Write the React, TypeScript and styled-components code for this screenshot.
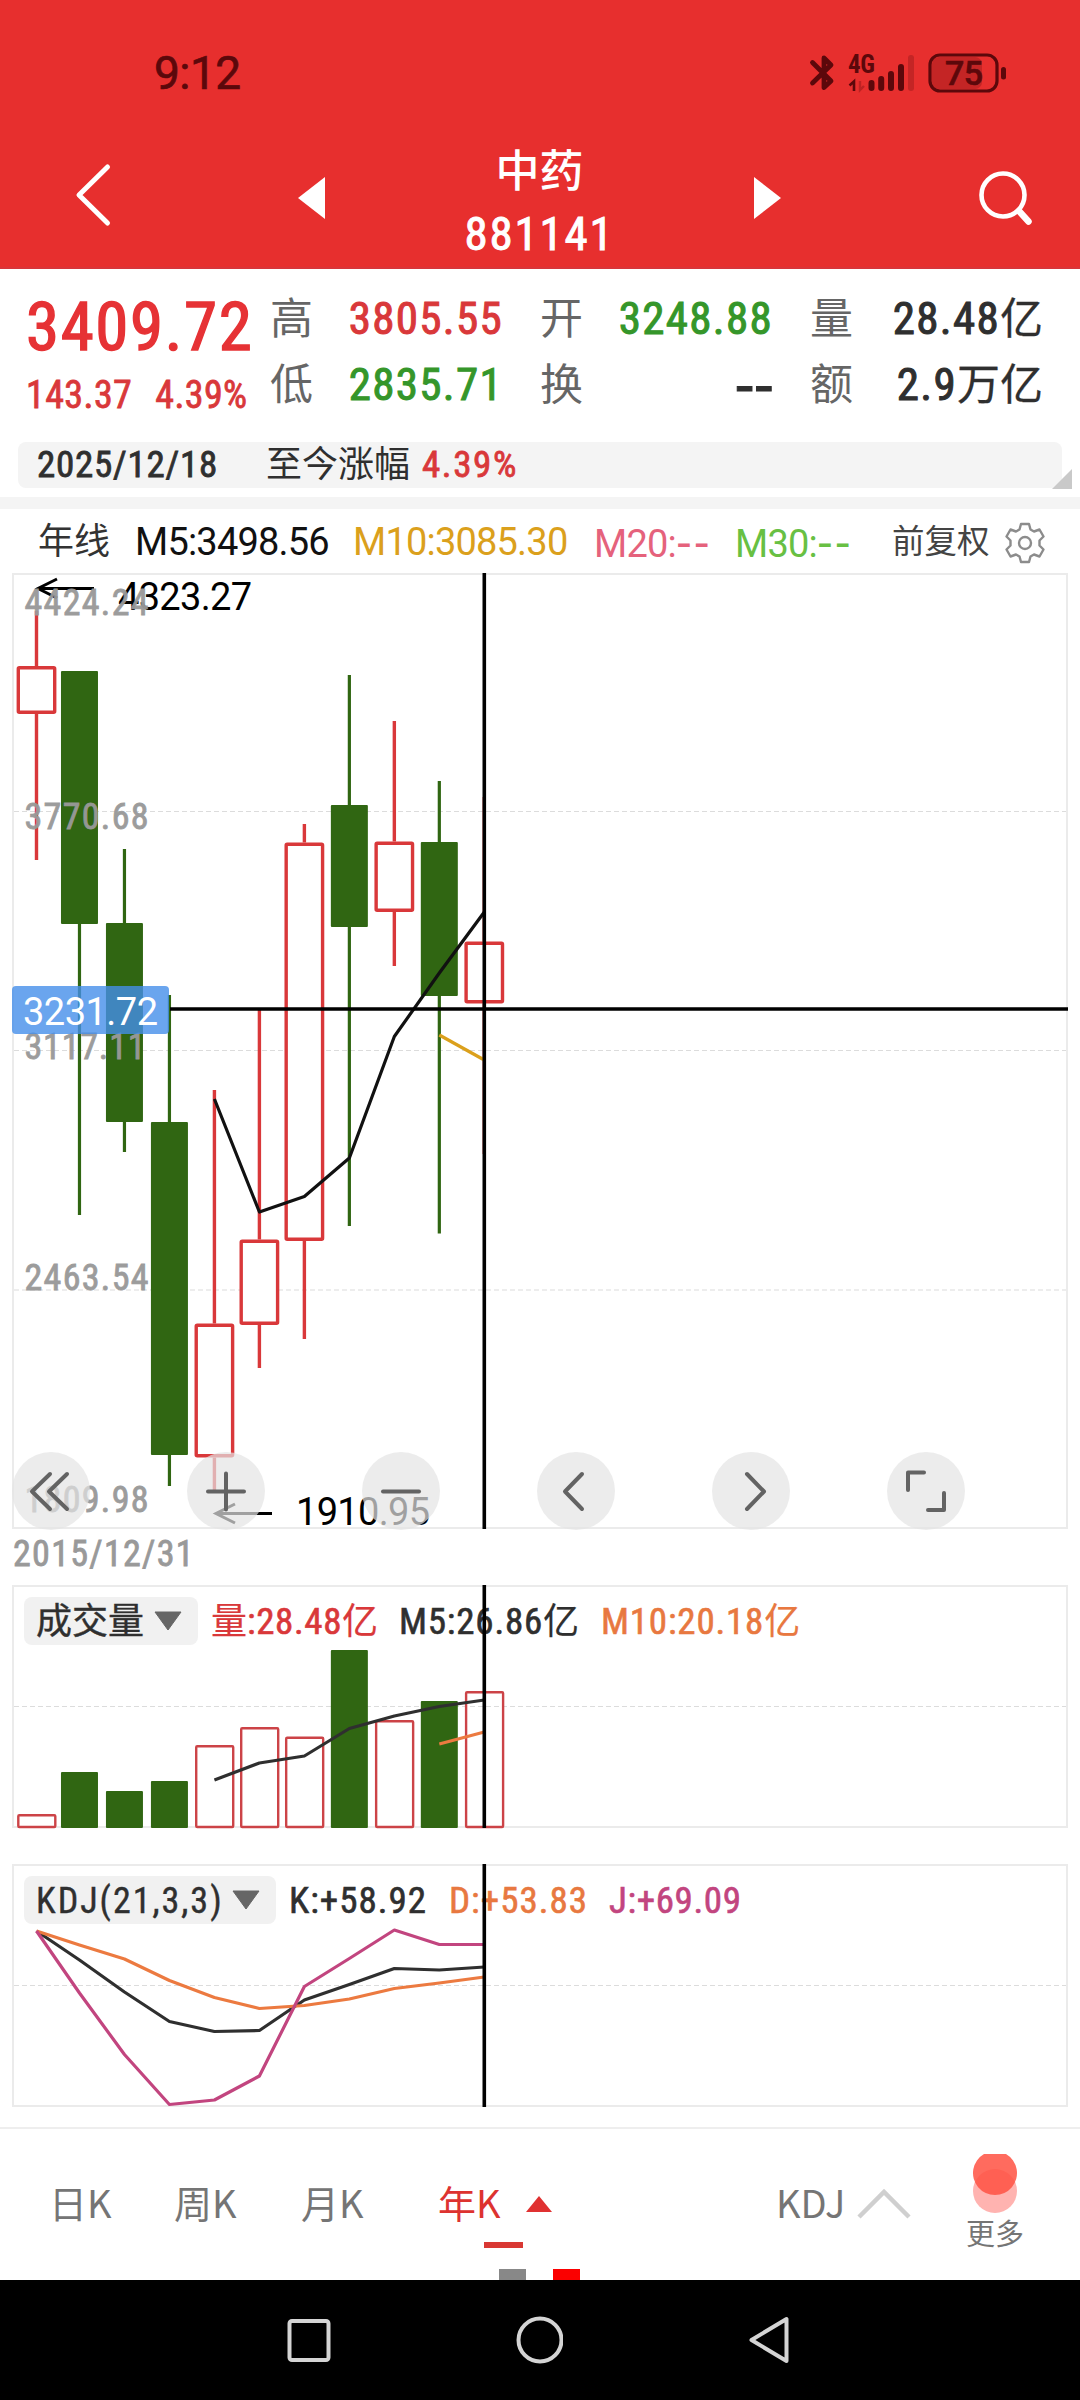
import React from 'react';
import styled, { createGlobalStyle } from 'styled-components';

const NARROW = '"Roboto Condensed", "Noto Sans CJK SC", sans-serif';
const SANS = 'Roboto, "Noto Sans CJK SC", sans-serif';

const RED = '#d9383a';
const GREEN = '#306612';
const INK = '#2f2f2f';

const GlobalStyle = createGlobalStyle`
  * { box-sizing: border-box; }
  body { margin: 0; background: #fff; }
  svg { display: block; }
`;

const Screen = styled.div`
  width: 1080px;
  height: 2400px;
  display: flex;
  flex-direction: column;
  background: #fff;
  font-family: ${SANS};
  overflow: hidden;
`;

/* ---------- header ---------- */
const Header = styled.header`
  height: 269px;
  background: #e72f2e;
  border-bottom: 2px solid #d8353a;
  flex: none;
`;

const StatusBar = styled.div`
  height: 144px;
  padding: 49px 72px 0 154px;
  display: flex;
  align-items: flex-start;
  justify-content: space-between;
`;

const Clock = styled.span`
  font: 400 46px/48px ${SANS};
  letter-spacing: -0.5px;
  color: #5c080b;
  -webkit-text-stroke: 0.7px #5c080b;
`;

const StatusIcons = styled.svg`
  margin-top: 1px;
`;

const TitleBar = styled.div`
  display: flex;
  align-items: flex-start;
  padding: 0 44px 0 74px;
  color: #fff;
`;

const Icon = styled.svg<{ $top?: number; $left?: number }>`
  flex: none;
  margin-top: ${p => p.$top ?? 0}px;
  margin-left: ${p => p.$left ?? 0}px;
`;

const Title = styled.div`
  width: 429px;
  flex: none;
  display: flex;
  flex-direction: column;
  align-items: center;
`;

const TitleName = styled.div`
  font: 500 44px/56px ${SANS};
`;

const TitleCode = styled.div`
  margin-top: 6px;
  font: 400 47px/56px ${NARROW};
  letter-spacing: 1.8px;
  -webkit-text-stroke: 0.9px #fff;
`;

/* ---------- quote ---------- */
const Quote = styled.section`
  height: 173px;
  flex: none;
  display: flex;
  padding-left: 26px;
`;

const Last = styled.div`
  width: 245px;
  padding-top: 22px;
  color: #e63235;
`;

const Price = styled.div`
  font: 400 67px/72px ${NARROW};
  letter-spacing: 1.6px;
  -webkit-text-stroke: 1.4px currentColor;
`;

const Change = styled.div`
  display: flex;
  margin-top: 8px;
  gap: 23px;
  font: 400 38px/48px ${NARROW};
  letter-spacing: 0.4px;
  color: ${RED};
  -webkit-text-stroke: 0.8px currentColor;
`;

const Facts = styled.dl`
  margin: 0;
  padding-top: 17px;
  display: grid;
  grid-template-columns: repeat(3, 270px);
  grid-auto-rows: 66px;
`;

const Fact = styled.div`
  width: 232px;
  display: flex;
  justify-content: space-between;
  line-height: 66px;
`;

const FactLabel = styled.dt`
  font-family: ${SANS};
  font-size: 43px;
  color: #666;
`;

const FactValue = styled.dd<{ $color?: string }>`
  margin: 0;
  font-family: ${NARROW};
  font-size: 45px;
  letter-spacing: 1.3px;
  margin-right: -1px;
  color: ${p => p.$color ?? INK};
  -webkit-text-stroke: 1px currentColor;
`;

const Unit = styled.span`
  font-size: 43px;
  letter-spacing: 0;
  -webkit-text-stroke: 0.3px currentColor;
`;

const Dashes = styled.span<{ $size: number; $spacing: number }>`
  font-family: "DejaVu Sans", sans-serif;
  font-size: ${p => p.$size}px;
  letter-spacing: ${p => p.$spacing}px;
`;

const Since = styled.div`
  position: relative;
  flex: none;
  height: 46px;
  margin: 0 18px;
  padding-left: 19px;
  display: flex;
  align-items: center;
  border-radius: 8px;
  background: #f4f4f4;
  color: ${INK};
`;

const SinceDate = styled.span`
  width: 229px;
  font: 400 37px/46px ${NARROW};
  letter-spacing: 0.75px;
  -webkit-text-stroke: 0.8px currentColor;
`;

const SinceLabel = styled.span`
  width: 156px;
  font: 400 36px/46px ${SANS};
`;

const SinceValue = styled(SinceDate)`
  width: auto;
  color: ${RED};
  letter-spacing: 1.6px;
`;

const Fold = styled.svg`
  position: absolute;
  right: -10px;
  bottom: -1px;
`;

const Divider = styled.div`
  flex: none;
  height: 12px;
  margin-top: 9px;
  background: #f4f4f4;
`;

const Averages = styled.div`
  flex: none;
  height: 64px;
  padding: 9px 34px 0 38px;
  display: flex;
  line-height: 48px;
  color: #333;
`;

const PeriodName = styled.span`
  width: 97px;
  font-size: 36px;
`;

const Average = styled.span<{ $color: string; $width: number }>`
  width: ${p => p.$width}px;
  font-size: 38px;
  letter-spacing: -0.8px;
  white-space: nowrap;
  color: ${p => p.$color};
`;

const Adjust = styled.span`
  width: 112px;
  font-size: 32.5px;
  color: #444;
`;

/* ---------- charts ---------- */
const Panel = styled.section<{ $height: number; $gap?: number }>`
  position: relative;
  flex: none;
  height: ${p => p.$height}px;
  margin: 0 12px ${p => p.$gap ?? 0}px;
  border: 2px solid #ebebeb;
`;

const Plot = styled.svg`
  position: absolute;
  left: -2px;
  top: -2px;
  overflow: visible;
`;

const Controls = styled.div`
  position: absolute;
  left: -2px;
  bottom: -3px;
  display: flex;
  gap: 97px;
`;

const Control = styled.button`
  width: 78px;
  height: 78px;
  padding: 0;
  border: 0;
  border-radius: 50%;
  background: rgba(228, 228, 228, 0.7);
`;

const StartDate = styled.div`
  flex: none;
  height: 56px;
  padding: 1px 0 0 13px;
  font: 400 36px/49px ${NARROW};
  letter-spacing: 1.3px;
  color: #999;
  -webkit-text-stroke: 0.8px currentColor;
`;

const Legend = styled.div`
  height: 70px;
  padding: 10px 0 0 10px;
  display: flex;
  font: 400 37px/50px ${NARROW};
  color: ${INK};
`;

const Picker = styled.div<{ $width: number }>`
  width: ${p => p.$width}px;
  height: 48px;
  padding: 0 16px 0 12px;
  display: flex;
  align-items: center;
  justify-content: space-between;
  border-radius: 8px;
  background: #f1f1f1;
  font-size: 36px;
  -webkit-text-stroke: 0.4px currentColor;
`;

const PickerText = styled.span<{ $spacing?: number }>`
  padding-top: 1px;
  letter-spacing: ${p => p.$spacing ?? 0}px;
  white-space: nowrap;
`;

const Reading = styled.span<{ $left: number; $width: number; $color?: string; $spacing?: number }>`
  margin-left: ${p => p.$left}px;
  width: ${p => p.$width}px;
  letter-spacing: ${p => p.$spacing ?? 0.8}px;
  white-space: nowrap;
  color: ${p => p.$color ?? INK};
  -webkit-text-stroke: 0.6px currentColor;
`;

const Han = styled.span`
  font-size: 36px;
  letter-spacing: 0;
  -webkit-text-stroke: 0.2px currentColor;
`;

/* ---------- tabs ---------- */
const Tabs = styled.nav`
  flex: none;
  height: 153px;
  border-top: 2px solid #eee;
  padding-left: 49px;
  display: flex;
  color: #757575;
  font: 400 38px/48px ${NARROW};
  position: relative;
`;

const Tab = styled.div<{ $width: number; $active?: boolean }>`
  width: ${p => p.$width}px;
  height: 123px;
  padding-top: 49px;
  display: flex;
  align-items: flex-start;
  white-space: nowrap;
  font-family: "Noto Sans CJK SC", sans-serif;
  color: ${p => (p.$active ? '#dd3330' : 'inherit')};
`;

const More = styled.div`
  padding-top: 24px;
  display: flex;
  flex-direction: column;
  align-items: center;
  font: 400 29px/36px ${SANS};
  gap: 2px;
`;

const Underline = styled.i`
  position: absolute;
  left: 484px;
  bottom: 32px;
  width: 39px;
  height: 6px;
  background: #d93833;
`;

const Pages = styled.div`
  position: absolute;
  left: 499px;
  bottom: 0;
  display: flex;
  gap: 27px;
`;

const Page = styled.i<{ $color: string }>`
  width: 27px;
  height: 11px;
  background: ${p => p.$color};
`;

const SystemNav = styled.div`
  flex: none;
  height: 120px;
  background: #000;
  display: flex;
  align-items: center;
  padding-left: 285px;
  gap: 182px;
`;

/* ---------- data, in screen pixels ---------- */
const cx = (i: number) => (i === 0 ? 36.5 : 34.5 + i * 44.98);

type Candle = { up: boolean; high: number; top: number; bottom: number; low: number; vol: number };
const candles: Candle[] = [
  { up: true, high: 611, top: 666, bottom: 714, low: 860, vol: 1814 },
  { up: false, high: 671, top: 671, bottom: 924, low: 1215, vol: 1772 },
  { up: false, high: 849, top: 923, bottom: 1122, low: 1152, vol: 1791 },
  { up: false, high: 995, top: 1122, bottom: 1455, low: 1486, vol: 1781 },
  { up: true, high: 1090, top: 1323.5, bottom: 1457.5, low: 1491, vol: 1745 },
  { up: true, high: 1010, top: 1239.5, bottom: 1325, low: 1368, vol: 1727 },
  { up: true, high: 824, top: 842.5, bottom: 1241, low: 1339, vol: 1736.5 },
  { up: false, high: 675, top: 805, bottom: 927, low: 1226, vol: 1650 },
  { up: true, high: 721, top: 841.5, bottom: 912, low: 966, vol: 1720 },
  { up: false, high: 781, top: 842, bottom: 996, low: 1233.5, vol: 1701 },
  { up: true, high: 797, top: 941.5, bottom: 1003.5, low: 1154, vol: 1691 },
];

const ma5 = [1099, 1212, 1196.5, 1158, 1036.5, 973, 912];
const ma10 = [1035, 1060];
const vol5 = [1780, 1763, 1756, 1728.5, 1716, 1706.5, 1700];
const vol10 = [1744, 1732];
const kLine = [1931, 1960, 1992, 2021.5, 2031.5, 2030.5, 2000, 1984.5, 1968.5, 1970, 1967];
const dLine = [1931, 1945, 1959, 1980.5, 1997.5, 2008.5, 2005.5, 1999, 1988.5, 1983, 1977];
const jLine = [1931, 1993, 2054.5, 2104.5, 2100, 2076, 1986.5, 1958.5, 1930, 1944.5, 1944.5];

const pts = (ys: number[], from: number) => ys.map((y, i) => `${cx(from + i)},${y}`).join(' ');

const axis = [
  { text: '4424.24', y: 615, w: 121 },
  { text: '3770.68', y: 829, w: 121 },
  { text: '3117.11', y: 1059, w: 118 },
  { text: '2463.54', y: 1290, w: 121 },
  { text: '1809.98', y: 1512, w: 121 },
];

function Line({ ys, from, color, width = 3.2 }: { ys: number[]; from: number; color: string; width?: number }) {
  return <polyline points={pts(ys, from)} fill="none" stroke={color} strokeWidth={width} strokeLinejoin="round" />;
}

function Grid({ y }: { y: number }) {
  return <line x1="14" x2="1066" y1={y} y2={y} stroke="#dcdcdc" strokeWidth="1.2" strokeDasharray="5 3" />;
}

function KChart() {
  return (
    <Plot width="1056" height="956" viewBox="12 573 1056 956">
      {[811.5, 1050.5, 1290].map(y => <Grid key={y} y={y} />)}
      {candles.map((c, i) => {
        const x = cx(i);
        return c.up ? (
          <g key={i} stroke={RED} strokeWidth="3.4" fill="none">
            <path d={`M${x} ${c.high}V${c.top}M${x} ${c.bottom}V${c.low}`} />
            <rect x={x - 18.2} y={c.top + 1.7} width="36.4" height={c.bottom - c.top - 3.4} rx="1" fill="#fff" />
          </g>
        ) : (
          <g key={i} fill={GREEN}>
            <rect x={x - 1.6} y={c.high} width="3.2" height={c.low - c.high} />
            <rect x={x - 18.5} y={c.top} width="37" height={c.bottom - c.top} rx="1" />
          </g>
        );
      })}
      <Line ys={ma5} from={4} color="#111" />
      <Line ys={ma10} from={9} color="#dba01c" />
      <g fill="none" stroke="#000" strokeWidth="3">
        <path d="M94 588.5H38M57 579L38 588.5L57 598" />
        <path d="M272 1513.5H216M235 1504L216 1513.5L235 1523" />
      </g>
      <g fill="#000" fontFamily={SANS} fontSize="38">
        <text x="118" y="610" textLength="134">4323.27</text>
        <text x="296" y="1524.5" textLength="134">1910.95</text>
      </g>
      <g fill="#999" stroke="#999" strokeWidth="0.8" fontFamily={NARROW} fontSize="36" opacity="0.96">
        {axis.map(a => <text key={a.text} x="24.500" y={a.y} textLength={a.w + 3}>{a.text}</text>)}
      </g>
      <rect x="12" y="986" width="157" height="48" rx="4" fill="rgba(69,142,234,0.8)" />
      <text x="23" y="1025" fontFamily={SANS} fontSize="38" fill="#fff" textLength="135">3231.72</text>
      <path d={`M170 1009H1068M${cx(10)} 573V1529`} stroke="#000" strokeWidth="3.600" />
    </Plot>
  );
}

function VolumeChart() {
  return (
    <Plot width="1056" height="243" viewBox="12 1585 1056 243">
      <Grid y={1706.5} />
      {candles.map((c, i) => c.up
        ? <rect key={i} x={cx(i) - 18.2} y={c.vol + 1.2} width="37" height={1828 - c.vol - 2.2} rx="1" fill="none" stroke="#cc4347" strokeWidth="2.400" />
        : <rect key={i} x={cx(i) - 18.5} y={c.vol} width="37" height={1828 - c.vol} rx="1" fill={GREEN} />)}
      <Line ys={vol5} from={4} color={INK} />
      <Line ys={vol10} from={9} color="#ec7a40" />
      <path d={`M${cx(10)} 1585V1828`} stroke="#000" strokeWidth="3.600" />
    </Plot>
  );
}

function KdjChart() {
  return (
    <Plot width="1056" height="243" viewBox="12 1864 1056 243">
      <Grid y={1985.5} />
      <Line ys={kLine} from={0} color={INK} />
      <Line ys={dLine} from={0} color="#ec7a40" />
      <Line ys={jLine} from={0} color="#c2457f" />
      <path d={`M${cx(10)} 1864V2107`} stroke="#000" strokeWidth="3.600" />
    </Plot>
  );
}

const controlPaths = [
  'M38 22L20 39.5L38 57M55 22L37 39.5L55 57',
  'M21 39.5H57M39 21.5V57.5',
  'M21 39.5H57',
  'M45 22L28 39.5L45 57',
  'M35 22L52 39.5L35 57',
  'M21 38V20.5H37M57 41V58H41',
];

const Caret = () => <svg width="28" height="20" viewBox="0 0 28 20"><path d="M1 1H27L14 19Z" fill="#666" stroke="#666" strokeLinejoin="round" /></svg>;

export default function App() {
  return (
    <Screen>
      <GlobalStyle />
      <Header>
        <StatusBar>
          <Clock>9:12</Clock>
          <StatusIcons width="200" height="44" viewBox="808 50 200 44" fill="none" stroke="#5c080b">
            <path d="M812.5 62.500L831 81L824 87.500V58L831 65L812.500 83" strokeWidth="4.800" strokeLinecap="round" strokeLinejoin="round" />
            <text x="848" y="73" fontFamily={NARROW} fontWeight="700" fontSize="25" textLength="27" fill="#5c080b" stroke="none">4G</text>
            <path d="M849.5 85.500L854 81.500V91" strokeWidth="2.600" />
            <path d="M860 81V90L864 86" strokeWidth="2.400" opacity="0.3" />
            <path d="M871.5 83V88M881.200 79V88M891 74V88M901 67V88" strokeWidth="6" strokeLinecap="round" />
            <path d="M911 58V88" strokeWidth="6" strokeLinecap="round" opacity="0.25" />
            <rect x="932" y="57" width="50" height="32" rx="7" fill="#5c080b" stroke="none" opacity="0.25" />
            <rect x="930" y="55" width="67" height="36" rx="10" strokeWidth="3.200" />
            <text x="945" y="85" fontFamily={SANS} fontWeight="500" fontSize="34" textLength="38" fill="#5c080b" stroke="#5c080b" strokeWidth="0.6">75</text>
            <path d="M1003.500 69.500V77" strokeWidth="5" strokeLinecap="round" />
          </StatusIcons>
        </StatusBar>
        <TitleBar>
          <Icon $top={18} width="40" height="66" viewBox="0 0 40 66" fill="none" stroke="#fff" strokeWidth="5" strokeLinecap="round" strokeLinejoin="round"><path d="M33.500 5L5 33L33.500 61" /></Icon>
          <Icon $top={33} $left={184} width="27" height="42" viewBox="0 0 27 42" fill="#fff"><path d="M27 0V42L0 21Z" /></Icon>
          <Title>
            <TitleName>中药</TitleName>
            <TitleCode>881141</TitleCode>
          </Title>
          <Icon $top={33} width="27" height="42" viewBox="0 0 27 42" fill="#fff"><path d="M0 0V42L27 21Z" /></Icon>
          <Icon $top={25} $left={197} width="56" height="56" viewBox="977 168 56 56" fill="none" stroke="#fff" strokeLinecap="round"><circle cx="1002" cy="194" r="21.500" strokeWidth="4.600" /><path d="M1018 210L1027.500 220.500" strokeWidth="6.500" /></Icon>
        </TitleBar>
      </Header>

      <Quote>
        <Last>
          <Price>3409.72</Price>
          <Change><span>143.37</span><span>4.39%</span></Change>
        </Last>
        <Facts>
          <Fact><FactLabel>高</FactLabel><FactValue $color={RED}>3805.55</FactValue></Fact>
          <Fact><FactLabel>开</FactLabel><FactValue $color="#35962a">3248.88</FactValue></Fact>
          <Fact><FactLabel>量</FactLabel><FactValue>28.48<Unit>亿</Unit></FactValue></Fact>
          <Fact><FactLabel>低</FactLabel><FactValue $color="#35962a">2835.71</FactValue></Fact>
          <Fact><FactLabel>换</FactLabel><FactValue><Dashes $size={56} $spacing={-1}>--</Dashes></FactValue></Fact>
          <Fact><FactLabel>额</FactLabel><FactValue>2.9<Unit>万亿</Unit></FactValue></Fact>
        </Facts>
      </Quote>
      <Since>
        <SinceDate>2025/12/18</SinceDate>
        <SinceLabel>至今涨幅</SinceLabel>
        <SinceValue>4.39%</SinceValue>
        <Fold width="20" height="20" viewBox="0 0 20 20"><path d="M20 0V20H0Z" fill="#c9c9c9" /></Fold>
      </Since>
      <Divider />
      <Averages>
        <PeriodName>年线</PeriodName>
        <Average $color="#111" $width={218}>M5:3498.56</Average>
        <Average $color="#dba01c" $width={241}>M10:3085.30</Average>
        <Average $color="#e5627c" $width={141}>M20:<Dashes $size={44} $spacing={2}>--</Dashes></Average>
        <Average $color="#68c043" $width={157}>M30:<Dashes $size={44} $spacing={2}>--</Dashes></Average>
        <Adjust>前复权</Adjust>
        <Icon $top={4} width="42" height="42" viewBox="-21 -21 42 42" fill="none" stroke="#8c8c8c" strokeWidth="2.400" strokeLinejoin="round">
          <circle r="6" />
          <path d="M-4 -19H4L5.500 -13.500L9 -11.500L14.500 -13.500L18.500 -6.500L14.500 -2.500V2.500L18.500 6.500L14.500 13.500L9 11.500L5.500 13.500L4 19H-4L-5.500 13.500L-9 11.500L-14.500 13.500L-18.500 6.500L-14.500 2.500V-2.500L-18.500 -6.500L-14.500 -13.500L-9 -11.500L-5.500 -13.500Z" />
        </Icon>
      </Averages>

      <Panel $height={956}>
        <KChart />
        <Controls>
          {controlPaths.map(d => (
            <Control key={d}>
              <svg width="78" height="78" viewBox="0 0 78 78" fill="none" stroke="#636363" strokeWidth="4" strokeLinecap="round" strokeLinejoin="round"><path d={d} /></svg>
            </Control>
          ))}
        </Controls>
      </Panel>
      <StartDate>2015/12/31</StartDate>

      <Panel $height={243} $gap={36}>
        <Legend>
          <Picker $width={174}><PickerText>成交量</PickerText><Caret /></Picker>
          <Reading $left={13} $width={188} $color={RED} $spacing={0.6}><Han>量</Han>:28.48<Han>亿</Han></Reading>
          <Reading $left={0} $width={202}>M5:26.86<Han>亿</Han></Reading>
          <Reading $left={0} $width={210} $color="#e87840">M10:20.18<Han>亿</Han></Reading>
        </Legend>
        <VolumeChart />
      </Panel>

      <Panel $height={243} $gap={20}>
        <Legend>
          <Picker $width={252}><PickerText $spacing={2}>KDJ(21,3,3)</PickerText><Caret /></Picker>
          <Reading $left={13} $width={160} $spacing={1}>K:+58.92</Reading>
          <Reading $left={0} $width={160} $color="#e87840" $spacing={1}>D:+53.83</Reading>
          <Reading $left={0} $width={160} $color="#c2457f" $spacing={0.6}>J:+69.09</Reading>
        </Legend>
        <KdjChart />
      </Panel>

      <Tabs>
        <Tab $width={125}>日K</Tab>
        <Tab $width={127}>周K</Tab>
        <Tab $width={137}>月K</Tab>
        <Tab $width={338} $active>
          年K
          <Icon $top={18} $left={25} width="26" height="16" viewBox="0 0 26 16" fill="#e03131"><path d="M13 0L26 16H0Z" /></Icon>
        </Tab>
        <Tab $width={190}>
          KDJ
          <Icon $top={10} $left={12} width="54" height="32" viewBox="0 0 54 32" fill="none" stroke="#cfcfcf" strokeWidth="4.500"><path d="M2 29L27 4L52 29" /></Icon>
        </Tab>
        <More>
          <svg width="46" height="62" viewBox="0 0 46 62">
            <circle cx="23" cy="38" r="22" fill="#ffb3b0" />
            <path d="M12 1H34A22 22 0 1 1 12 1Z" fill="#ff5343" opacity="0.86" />
          </svg>
          更多
        </More>
        <Underline />
        <Pages><Page $color="#888" /><Page $color="#fb0000" /></Pages>
      </Tabs>
      <SystemNav>
        <svg width="48" height="48" viewBox="0 0 48 48" fill="none" stroke="#d4d4d4" strokeWidth="4"><rect x="4.500" y="5" width="39" height="39" rx="2.500" /></svg>
        <svg width="48" height="48" viewBox="0 0 48 48" fill="none" stroke="#d4d4d4" strokeWidth="4"><circle cx="25" cy="24" r="21.500" /></svg>
        <svg width="48" height="48" viewBox="0 0 48 48" fill="none" stroke="#d4d4d4" strokeWidth="4" strokeLinejoin="round"><path d="M41.500 3V45L6.500 24Z" /></svg>
      </SystemNav>
    </Screen>
  );
}
